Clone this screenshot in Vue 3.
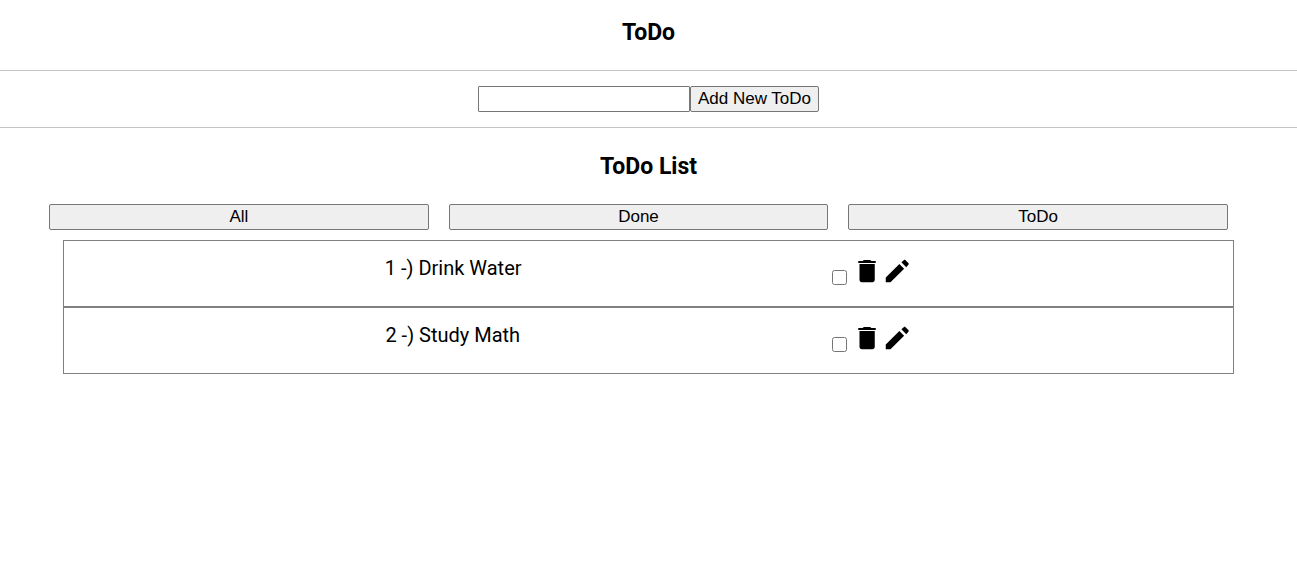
<script setup>
import { ref } from 'vue'

const draft = ref('')
const filter = ref('All')
const filters = ['All', 'Done', 'ToDo']
const todos = ref([
  { id: 1, text: 'Drink Water', done: false },
  { id: 2, text: 'Study Math', done: false },
])

function addTodo() {
  const text = draft.value.trim()
  if (!text) return
  todos.value.push({ id: Date.now(), text, done: false })
  draft.value = ''
}

function removeTodo(id) {
  todos.value = todos.value.filter((t) => t.id !== id)
}

function isShown(todo) {
  return filter.value === 'All' || todo.done === (filter.value === 'Done')
}
</script>

<template>
  <main class="page">
    <h1 class="title">ToDo</h1>
    <form class="add" @submit.prevent="addTodo">
      <input v-model="draft" class="field" type="text" aria-label="New ToDo" />
      <button class="btn" type="submit">Add New ToDo</button>
    </form>
    <h2 class="title">ToDo List</h2>
    <div class="filters">
      <button v-for="name in filters" :key="name" class="btn" type="button" @click="filter = name">{{ name }}</button>
    </div>
    <ul class="list">
      <li v-for="(todo, i) in todos" v-show="isShown(todo)" :key="todo.id" class="row">
        <label class="text" :for="'todo-' + todo.id">{{ i + 1 }} -) {{ todo.text }}</label>
        <div class="actions">
          <input :id="'todo-' + todo.id" v-model="todo.done" class="check" type="checkbox" />
          <button class="icon" type="button" aria-label="Delete" @click="removeTodo(todo.id)">
            <svg viewBox="0 0 24 24"><path d="M6 19.200c0 1 .8 1.700 1.800 1.700h8.600c1 0 1.800-.7 1.800-1.700V6.400H6zM19 3.900h-3.500l-1-.7h-5l-1 .7H5v1.700h14z" /></svg>
          </button>
          <button class="icon" type="button" aria-label="Edit">
            <svg viewBox="0 0 24 24"><path d="M3 17.200V21h3.800L17.700 10.100l-3.800-3.800zM21.100 7c.4-.4.4-1 0-1.400l-2.300-2.300c-.4-.4-1-.4-1.400 0l-1.900 1.700 3.900 3.900z" /></svg>
          </button>
        </div>
      </li>
    </ul>
  </main>
</template>

<style>
body {
  margin: 0;
  background: #fff;
}
</style>

<style scoped>
.page {
  color: #000;
  font-family: Roboto, sans-serif;
}
.title {
  margin: 0;
  padding: 19px 0 23px;
  font-size: 23px;
  font-weight: 700;
  line-height: 28px;
  text-align: center;
}
.add {
  display: flex;
  justify-content: center;
  padding: 15px 0;
  border-top: 1px solid #c4c4c4;
  border-bottom: 1px solid #c4c4c4;
}
.add + .title {
  padding: 25px 0 23px;
}
.field,
.btn {
  box-sizing: border-box;
  height: 26px;
  margin: 0;
  border: 1px solid #767676;
  border-radius: 2px;
  font: 17px/20px "Liberation Sans", Arial, sans-serif;
  color: #000;
}
.field {
  width: 212px;
  padding: 1px 2px;
  border-radius: 1px;
  background: #fff;
}
.btn {
  padding: 0 7px;
  background: #efefef;
}
.filters {
  display: flex;
  gap: 20px;
  margin: 0 69px 0 49px;
}
.filters .btn {
  flex: 1;
}
.list {
  margin: 10px 63px 0;
  padding: 0;
  list-style: none;
}
.row {
  display: flex;
  justify-content: space-evenly;
  padding: 15px 10px 20px;
  border: 1px solid #808080;
}
.text {
  font-size: 20px;
  line-height: 24px;
}
.actions {
  display: flex;
  align-items: flex-start;
}
.check {
  width: 15px;
  height: 15px;
  margin: 14px 5px 0 0;
}
.icon {
  width: 30px;
  height: 30px;
  padding: 0;
  border: 0;
  background: none;
}
.icon svg {
  display: block;
  width: 30px;
  height: 30px;
  fill: #000;
}
</style>
